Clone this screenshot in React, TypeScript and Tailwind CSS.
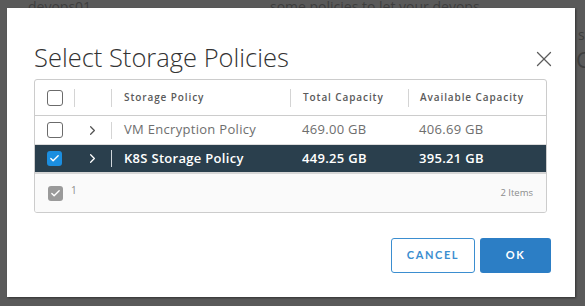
import { X, ChevronRight, Check } from "lucide-react";

const rows = [
  { name: "VM Encryption Policy", total: "469.00 GB", avail: "406.69 GB", selected: false },
  { name: "K8S Storage Policy", total: "449.25 GB", avail: "395.21 GB", selected: true },
];

function Box({ checked, muted }: { checked?: boolean; muted?: boolean }) {
  if (checked)
    return (
      <span
        className={`flex items-center justify-center w-[15px] h-[15px] rounded-[3px] ${
          muted ? "bg-[#9a9a9a]" : "bg-[#1b8ee0]"
        }`}
      >
        <Check size={11} strokeWidth={3} className="text-white" />
      </span>
    );
  return <span className="block w-[16px] h-[16px] rounded-[3px] border-[1.5px] border-[#6b6b6b] bg-white" />;
}

export default function App() {
  return (
    <div className="relative w-[585px] h-[306px] overflow-hidden bg-[#5a5a5a] font-['Open_Sans',sans-serif]">
      {/* ── dimmed page behind ── */}
      <span className="absolute left-[28px] top-0 text-[14px] leading-[14px] text-[#3e3e3e]">devops01</span>
      <span className="absolute left-[270px] top-0 text-[14px] leading-[14px] text-[#3e3e3e]">some policies to let your devops</span>
      <span className="absolute left-[578px] top-[28px] text-[14px] leading-[14px] text-[#3e3e3e]">s</span>
      <span className="absolute left-[576px] top-[48px] text-[22px] leading-[22px] text-[#3e3e3e]">C</span>

      {/* ── Modal ── */}
      <div className="relative ml-[7px] mt-[8px] w-[568px] h-[289px] bg-white shadow-[1px_1px_2px_rgba(0,0,0,0.45)] flex flex-col">
        <div className="flex items-center justify-between pl-[27px] pr-[18px] pt-[27px] h-[72px]">
          <h1 className="text-[25.5px] font-light text-[#333] leading-none">
            Select Storage Policies
          </h1>
          <X size={26} strokeWidth={1.2} className="text-[#5c5c5c] mt-[2px]" />
        </div>

        {/* ── Datagrid ── */}
        <div className="ml-[27px] mt-[-1px] w-[513px] border border-[#cccccc] rounded-[3px] overflow-hidden">
          <div className="grid grid-cols-[39px_37px_179px_118px_1fr] h-[36px] items-center border-b border-[#cccccc] text-[10px] font-semibold text-[#5a5a5a] tracking-[0.9px]">
            <div className="pl-[12px]"><Box /></div>
            <div className="h-[18px] border-l border-[#d4d4d4]" />
            <div className="h-[18px] border-l border-[#d4d4d4] pl-[12px] flex items-center">Storage Policy</div>
            <div className="h-[18px] border-l border-[#d4d4d4] pl-[12px] flex items-center">Total Capacity</div>
            <div className="h-[18px] border-l border-[#d4d4d4] pl-[11px] flex items-center">Available Capacity</div>
          </div>

          {rows.map((r) => (
            <div
              key={r.name}
              className={`grid grid-cols-[39px_37px_179px_118px_1fr] items-center text-[13px] tracking-[0.3px] ${
                r.selected
                  ? "h-[27px] bg-[#2a3f4d] text-white font-semibold"
                  : "h-[29px] border-b border-[#dddddd] text-[#6e6e6e]"
              }`}
            >
              <div className="pl-[12px]"><Box checked={r.selected} /></div>
              <div className="flex items-center justify-end h-full">
                <ChevronRight size={15} strokeWidth={2} className={`mr-[11px] ${r.selected ? "text-white" : "text-[#555]"}`} />
              </div>
              <div className={`h-[17px] flex items-center pl-[12px] border-l ${r.selected ? "border-[#cfd6db]" : "border-[#d4d4d4]"}`}>
                {r.name}
              </div>
              <div className="pl-[12px]">{r.total}</div>
              <div className="pl-[11px]">{r.avail}</div>
            </div>
          ))}

          <div className="flex items-center justify-between h-[40px] bg-[#fafafa] border-t-[2px] border-[#d6d6d6] pl-[13px] pr-[13px] text-[10px] text-[#8c8c8c]">
            <div className="flex items-center gap-[8px]">
              <Box checked muted />
              <span className="mt-[-5px]">1</span>
            </div>
            <span className="text-[9.5px]">2 Items</span>
          </div>
        </div>

        {/* ── Actions ── */}
        <div className="flex justify-end gap-[5px] pr-[24px] mt-[25px] font-['Lato',sans-serif]">
          <button className="w-[84px] h-[35px] rounded-[3px] border border-[#3b8ed0] bg-white text-[#3b8ed0] text-[11px] font-bold tracking-[1.6px]">
            CANCEL
          </button>
          <button className="w-[71px] h-[35px] rounded-[3px] bg-[#2c7ec5] text-white text-[11px] font-bold tracking-[1.6px]">
            OK
          </button>
        </div>
      </div>
    </div>
  );
}
